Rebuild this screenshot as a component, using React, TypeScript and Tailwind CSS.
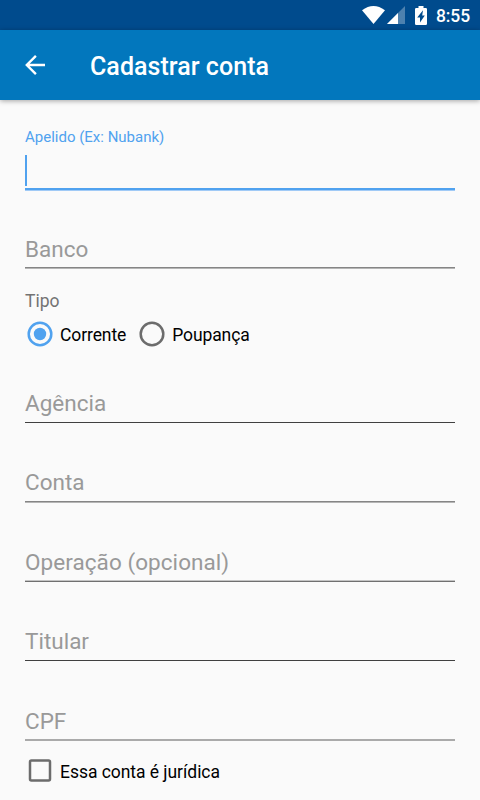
type FieldProps = {
  label: string;
  className: string;
  labelClass?: string;
  lineClass: string;
};

function Field({ label, className, labelClass = 'mb-1', lineClass }: FieldProps) {
  return (
    <div className={`flex flex-col justify-end ${className}`}>
      <label className={`h-[30px] text-[22.5px] leading-[30px] text-[#999] ${labelClass}`}>{label}</label>
      <div className={`h-[2px] border-t border-b ${lineClass}`} />
    </div>
  );
}

function Radio({ label, checked = false }: { label: string; checked?: boolean }) {
  const color = checked ? '#50a2ef' : '#6c6c6c';

  return (
    <label className="flex items-center">
      <svg width="30" height="30" viewBox="0 0 30 30" fill="none" className="shrink-0">
        <circle cx="15" cy="15" r="11.3" stroke={color} strokeWidth="2.5" />
        {checked && <circle cx="15" cy="15" r="6.2" fill={color} />}
      </svg>
      <span className="ml-[5px] pt-[2px] text-[17.5px] leading-[22px] tracking-[-0.1px] text-black">{label}</span>
    </label>
  );
}

function StatusBar() {
  return (
    <div className="flex h-[30px] items-center bg-[#004b8d] pl-[362px] text-white">
      <svg width="23" height="18" viewBox="0 0 23 18" className="shrink-0">
        <path d="M0 4.3Q11.5 -4.3 23 4.3L11.5 18Z" fill="currentColor" />
      </svg>
      <svg width="18" height="18" viewBox="0 0 18 18" className="ml-[2px] shrink-0">
        <path d="M18 0V18H0Z" fill="currentColor" opacity="0.3" />
        <path d="M11 7V18H0Z" fill="currentColor" />
      </svg>
      <svg width="12" height="19" viewBox="0 0 12 19" className="ml-[10px] shrink-0">
        <path d="M1.2 2H3.5V0H8.5V2H10.8Q12 2 12 3.2V17.8Q12 19 10.8 19H1.2Q0 19 0 17.8V3.2Q0 2 1.2 2Z" fill="currentColor" />
        <path d="M8 4.2L2.2 11.4H5V16.6L9.8 9.4H7.2Z" fill="#004b8d" />
      </svg>
      <span className="ml-[9px] pt-[2px] text-[17.5px] leading-[28px] font-medium tracking-[-0.1px]">8:55</span>
    </div>
  );
}

function AppBar() {
  return (
    <header className="relative flex h-[70px] items-center bg-[#0277bd] pl-[25px] text-white shadow-[0_1px_5px_rgba(0,0,0,0.35)]">
      <svg width="20" height="20" viewBox="0 0 20 20" fill="none" stroke="currentColor" strokeWidth="2.4" className="shrink-0">
        <path d="M20 10H2M10.9 .9L1.8 10L10.9 19.1" />
      </svg>
      <h1 className="ml-[45px] pt-[4px] text-[25px] leading-[30px] font-medium tracking-[0.04px]">Cadastrar conta</h1>
    </header>
  );
}

export default function App() {
  return (
    <div className="h-[800px] w-full overflow-hidden bg-[#fafafa] font-[Roboto,sans-serif]">
      <StatusBar />
      <AppBar />

      <form className="flex flex-col px-[25px]">
        <div className="flex h-[91px] flex-col pt-[27px]">
          <label className="text-[15px] leading-[20px] text-[#50a2ef]">Apelido (Ex: Nubank)</label>
          <div className="mt-[8px] h-[31px] w-[2px] bg-[#50a2ef]" />
          <div className="mt-[2px] h-[3px] border-b border-[#a0caf6] bg-[#50a2ef]" />
        </div>

        <Field label="Banco" className="h-[78px]" labelClass="mb-[3px]" lineClass="border-t-[#858585] border-b-[#b5b5b5]" />

        <div className="h-[81px] pt-[21px]">
          <p className="text-[17.5px] leading-[22px] text-[#737373]">Tipo</p>
          <div className="mt-[7px] flex h-[30px] items-center gap-[11px]">
            <Radio label="Corrente" checked />
            <Radio label="Poupança" />
          </div>
        </div>

        <Field label="Agência" className="h-[74px]" lineClass="border-t-[#404040] border-b-transparent" />
        <Field label="Conta" className="h-[79px]" lineClass="border-t-[#858585] border-b-[#b5b5b5]" />
        <Field
          label="Operação (opcional)"
          className="h-[79px]"
          labelClass="mb-[3px] tracking-[0.06px]"
          lineClass="border-t-[#c4c4c4] border-b-[#707070]"
        />
        <Field label="Titular" className="h-[80px]" lineClass="border-t-[#404040] border-b-transparent" />
        <Field label="CPF" className="h-[79px]" labelClass="mb-[3px]" lineClass="border-t-[#aaa] border-b-[#aaa]" />

        <label className="mt-[15px] flex h-[30px] items-center">
          <svg width="30" height="30" viewBox="0 0 30 30" fill="none" className="shrink-0">
            <rect x="5" y="4.5" width="20" height="20" rx="1.4" stroke="#6c6c6c" strokeWidth="2.5" />
          </svg>
          <span className="ml-[5px] pt-[2px] text-[17.5px] leading-[22px] tracking-[-0.04px] text-black">Essa conta é jurídica</span>
        </label>
      </form>
    </div>
  );
}
